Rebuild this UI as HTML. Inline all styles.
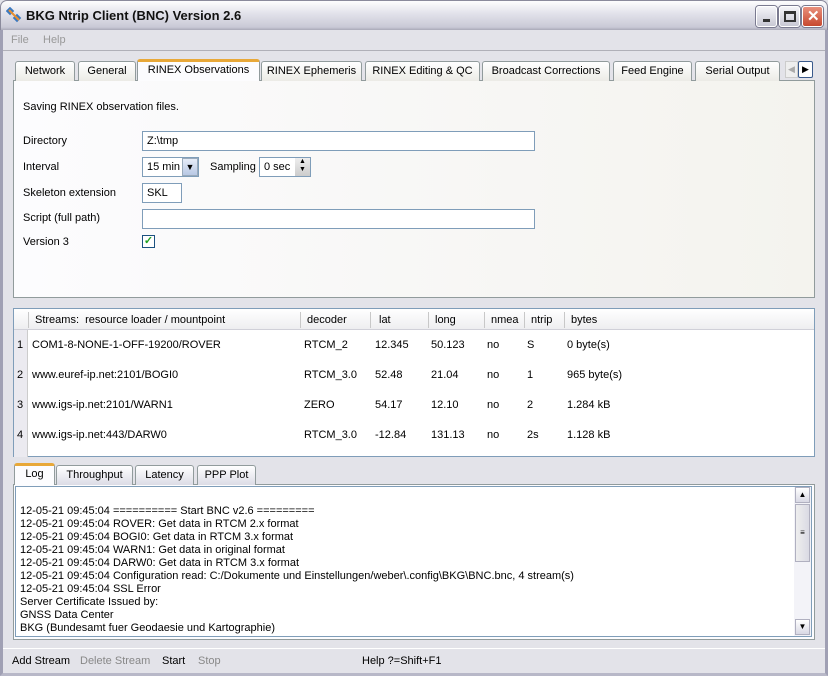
<!DOCTYPE html>
<html><head><style>
*{margin:0;padding:0;box-sizing:border-box}
body{width:828px;height:676px;overflow:hidden;background:#e3e3e9;font-family:"Liberation Sans",sans-serif;font-size:11px;color:#000;position:relative}
.a{position:absolute;white-space:nowrap}
.title{left:0;top:0;width:828px;height:30px;background:linear-gradient(#fdfdfe,#e4e4ec 40%,#c9c9d6 90%,#a9a9b8);border:1px solid #8a8a9c;border-bottom:none;border-radius:7px 7px 0 0}
.frame{left:0;top:30px;width:828px;height:646px;border:3px solid #b8b8c8;border-top:none;border-left-color:#a0a0b4;border-right-color:#a0a0b4}
.tb{width:21px;height:21px;top:6px;border:1px solid #fff;border-radius:3px;background:linear-gradient(#f4f4f8,#c8c8d4);box-shadow:0 0 0 1px #7a7a90}
.tab{top:61px;height:20px;border:1px solid #919b9c;border-bottom:none;border-radius:3px 3px 0 0;background:linear-gradient(#fff,#ecebe6);text-align:center;line-height:19px;font-size:11px}
.panel{border:1px solid #919b9c;background:linear-gradient(90deg,#fcfcfe,#f4f3ee)}
.inp{background:#fff;border:1px solid #7f9db9;height:20px;line-height:19px;padding-left:4px}
.log{left:20px}
.sep{top:312px;width:1px;height:16px;background:#c8c8c8}
</style></head><body>
<div class="a title"></div>
<div class="a frame"></div>
<svg class="a" style="left:6px;top:7px" width="16" height="16"><rect x="1" y="1" width="6" height="6" fill="#3a78c0" transform="rotate(45 4 4)"/><rect x="8" y="8" width="6" height="6" fill="#3a78c0" transform="rotate(45 11 11)"/><line x1="3" y1="3" x2="13" y2="13" stroke="#e89030" stroke-width="2"/></svg>
<div class="a" style="left:26px;top:8px;font-size:13px;font-weight:bold;color:#111">BKG Ntrip Client (BNC) Version 2.6</div>
<div class="a tb" style="left:756px"><div class="a" style="left:6px;top:12px;width:7px;height:3px;background:#333"></div></div>
<div class="a tb" style="left:779px"><div class="a" style="left:4px;top:4px;width:12px;height:11px;border:2px solid #333;border-top-width:3px"></div></div>
<div class="a tb" style="left:802px;background:linear-gradient(#e9907c,#c7482f)"><div class="a" style="left:4px;top:0px;color:#fff;font-size:15px;font-weight:bold">✕</div></div>
<div class="a" style="left:11px;top:34px;color:#999">File</div>
<div class="a" style="left:43px;top:34px;color:#999">Help</div>
<div class="a" style="left:3px;top:50px;width:822px;height:1px;background:#b0b0b8"></div>

<div class="a panel" style="left:13px;top:80px;width:802px;height:218px"></div>
<div class="a tab" style="left:15px;width:60px">Network</div>
<div class="a tab" style="left:78px;width:58px">General</div>
<div class="a tab" style="left:137px;top:59px;height:22px;width:123px;background:#fcfcfe;border-top:3px solid #e8a838;line-height:17px">RINEX Observations</div>
<div class="a tab" style="left:261px;width:101px">RINEX Ephemeris</div>
<div class="a tab" style="left:365px;width:115px">RINEX Editing &amp; QC</div>
<div class="a tab" style="left:482px;width:128px">Broadcast Corrections</div>
<div class="a tab" style="left:613px;width:79px">Feed Engine</div>
<div class="a tab" style="left:695px;width:85px">Serial Output</div>
<div class="a" style="left:785px;top:61px;width:13px;height:17px;border:1px solid #ccc;background:#eee;color:#aaa;font-size:9px;text-align:center;line-height:15px">◀</div>
<div class="a" style="left:798px;top:61px;width:15px;height:17px;border:1px solid #3a5a8c;border-radius:2px;background:#fff;font-size:9px;text-align:center;line-height:15px">▶</div>

<div class="a" style="left:23px;top:101px">Saving RINEX observation files.</div>
<div class="a" style="left:23px;top:135px">Directory</div>
<div class="a inp" style="left:142px;top:131px;width:393px">Z:\tmp</div>
<div class="a" style="left:23px;top:161px">Interval</div>
<div class="a inp" style="left:142px;top:157px;width:57px">15 min</div>
<div class="a" style="left:182px;top:158px;width:16px;height:18px;background:linear-gradient(#e6ecf8,#b8c8e4);border:1px solid #9ab;font-size:9px;text-align:center;line-height:16px">▼</div>
<div class="a" style="left:210px;top:161px">Sampling</div>
<div class="a inp" style="left:259px;top:157px;width:52px">0 sec</div>
<div class="a" style="left:295px;top:158px;width:15px;height:18px;background:linear-gradient(#eee,#ccc);font-size:7px;text-align:center;line-height:8px">▲<br>▼</div>
<div class="a" style="left:23px;top:187px">Skeleton extension</div>
<div class="a inp" style="left:142px;top:183px;width:40px">SKL</div>
<div class="a" style="left:23px;top:212px">Script (full path)</div>
<div class="a inp" style="left:142px;top:209px;width:393px"></div>
<div class="a" style="left:23px;top:236px">Version 3</div>
<div class="a" style="left:142px;top:235px;width:13px;height:13px;border:1px solid #1c5180;background:#fff;color:#21a121;font-size:11px;line-height:11px;text-align:center;font-weight:bold">✓</div>

<div class="a" style="left:13px;top:308px;width:802px;height:149px;border:1px solid #7f9db9;background:#fff"></div>
<div class="a" style="left:14px;top:309px;width:800px;height:21px;background:linear-gradient(#fff,#eeeef0);border-bottom:1px solid #d0d0d8"></div>
<div class="a" style="left:14px;top:330px;width:14px;height:127px;background:#ebeaf0;border-right:1px solid #ccc"></div>
<div class="a sep" style="left:28px"></div><div class="a sep" style="left:300px"></div><div class="a sep" style="left:370px"></div><div class="a sep" style="left:428px"></div><div class="a sep" style="left:484px"></div><div class="a sep" style="left:524px"></div><div class="a sep" style="left:564px"></div>
<div class="a" style="left:35px;top:314px">Streams:&nbsp; resource loader / mountpoint</div>
<div class="a" style="left:307px;top:314px">decoder</div><div class="a" style="left:379px;top:314px">lat</div><div class="a" style="left:435px;top:314px">long</div><div class="a" style="left:491px;top:314px">nmea</div><div class="a" style="left:531px;top:314px">ntrip</div><div class="a" style="left:571px;top:314px">bytes</div>

<div class="a" style="left:17px;top:339px">1</div><div class="a" style="left:32px;top:339px">COM1-8-NONE-1-OFF-19200/ROVER</div><div class="a" style="left:304px;top:339px">RTCM_2</div><div class="a" style="left:375px;top:339px">12.345</div><div class="a" style="left:431px;top:339px">50.123</div><div class="a" style="left:487px;top:339px">no</div><div class="a" style="left:527px;top:339px">S</div><div class="a" style="left:567px;top:339px">0 byte(s)</div>
<div class="a" style="left:17px;top:369px">2</div><div class="a" style="left:32px;top:369px">www.euref-ip.net:2101/BOGI0</div><div class="a" style="left:304px;top:369px">RTCM_3.0</div><div class="a" style="left:375px;top:369px">52.48</div><div class="a" style="left:431px;top:369px">21.04</div><div class="a" style="left:487px;top:369px">no</div><div class="a" style="left:527px;top:369px">1</div><div class="a" style="left:567px;top:369px">965 byte(s)</div>
<div class="a" style="left:17px;top:399px">3</div><div class="a" style="left:32px;top:399px">www.igs-ip.net:2101/WARN1</div><div class="a" style="left:304px;top:399px">ZERO</div><div class="a" style="left:375px;top:399px">54.17</div><div class="a" style="left:431px;top:399px">12.10</div><div class="a" style="left:487px;top:399px">no</div><div class="a" style="left:527px;top:399px">2</div><div class="a" style="left:567px;top:399px">1.284 kB</div>
<div class="a" style="left:17px;top:429px">4</div><div class="a" style="left:32px;top:429px">www.igs-ip.net:443/DARW0</div><div class="a" style="left:304px;top:429px">RTCM_3.0</div><div class="a" style="left:375px;top:429px">-12.84</div><div class="a" style="left:431px;top:429px">131.13</div><div class="a" style="left:487px;top:429px">no</div><div class="a" style="left:527px;top:429px">2s</div><div class="a" style="left:567px;top:429px">1.128 kB</div>

<div class="a panel" style="left:13px;top:484px;width:802px;height:156px;background:#fcfcfe"></div>
<div class="a" style="left:15px;top:486px;width:797px;height:151px;border:1px solid #7f9db9;background:#fff"></div>
<div class="a tab" style="left:14px;top:463px;height:22px;width:41px;background:#fcfcfe;border-top:3px solid #e8a838;line-height:17px">Log</div>
<div class="a tab" style="left:56px;top:465px;width:77px;background:linear-gradient(#fff,#dcdce6)">Throughput</div>
<div class="a tab" style="left:135px;top:465px;width:59px;background:linear-gradient(#fff,#dcdce6)">Latency</div>
<div class="a tab" style="left:197px;top:465px;width:59px;background:linear-gradient(#fff,#dcdce6)">PPP Plot</div>
<div class="a" style="left:794px;top:487px;width:17px;height:149px;background:#f3f3f8"></div>
<div class="a" style="left:795px;top:487px;width:15px;height:16px;border:1px solid #b0b0c0;background:linear-gradient(#fff,#d8d8e4);font-size:8px;text-align:center;line-height:14px">▲</div>
<div class="a" style="left:795px;top:504px;width:15px;height:58px;border:1px solid #b0b0c0;background:linear-gradient(90deg,#eee,#dadae4);font-size:8px;text-align:center;line-height:56px">≡</div>
<div class="a" style="left:795px;top:619px;width:15px;height:16px;border:1px solid #b0b0c0;background:linear-gradient(#fff,#d8d8e4);font-size:8px;text-align:center;line-height:14px">▼</div>
<div class="a log" style="top:505px">12-05-21 09:45:04 ========== Start BNC v2.6 =========</div>
<div class="a log" style="top:518px">12-05-21 09:45:04 ROVER: Get data in RTCM 2.x format</div>
<div class="a log" style="top:531px">12-05-21 09:45:04 BOGI0: Get data in RTCM 3.x format</div>
<div class="a log" style="top:544px">12-05-21 09:45:04 WARN1: Get data in original format</div>
<div class="a log" style="top:557px">12-05-21 09:45:04 DARW0: Get data in RTCM 3.x format</div>
<div class="a log" style="top:570px">12-05-21 09:45:04 Configuration read: C:/Dokumente und Einstellungen/weber\.config\BKG\BNC.bnc, 4 stream(s)</div>
<div class="a log" style="top:583px">12-05-21 09:45:04 SSL Error</div>
<div class="a log" style="top:596px">Server Certificate Issued by:</div>
<div class="a log" style="top:609px">GNSS Data Center</div>
<div class="a log" style="top:622px">BKG (Bundesamt fuer Geodaesie und Kartographie)</div>

<div class="a" style="left:3px;top:648px;width:822px;height:1px;background:#fff"></div>
<div class="a" style="left:12px;top:655px">Add Stream</div>
<div class="a" style="left:80px;top:655px;color:#888">Delete Stream</div>
<div class="a" style="left:162px;top:655px">Start</div>
<div class="a" style="left:198px;top:655px;color:#888">Stop</div>
<div class="a" style="left:362px;top:655px">Help ?=Shift+F1</div>
</body></html>
